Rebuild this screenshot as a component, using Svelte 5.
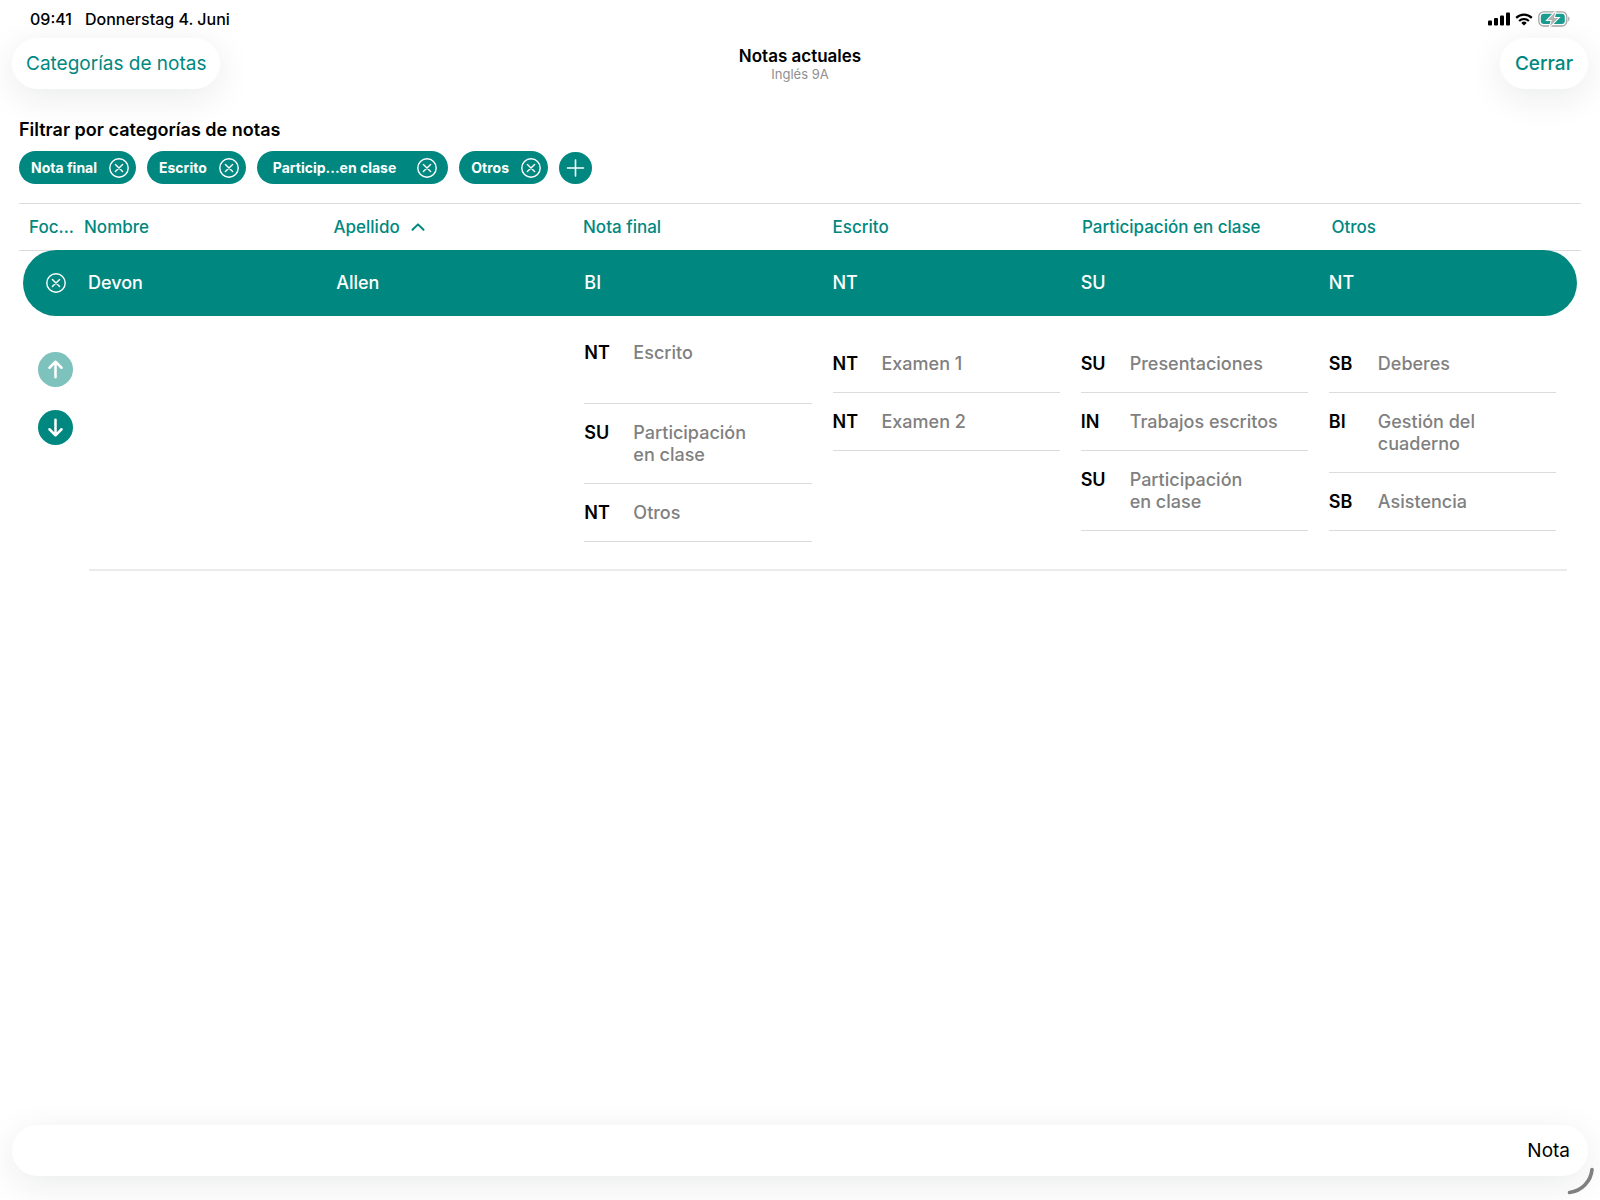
<script>
  const columns = ["Nota final", "Escrito", "Participación en clase", "Otros"];

  let filters = $state([
    { label: "Nota final" },
    { label: "Escrito" },
    { label: "Particip...en clase", full: "Participación en clase", wide: true },
    { label: "Otros" },
  ]);

  const student = { first: "Devon", last: "Allen", grades: ["BI", "NT", "SU", "NT"] };

  const details = [
    [
      { grade: "NT", label: "Escrito", tall: true },
      { grade: "SU", label: "Participación en clase" },
      { grade: "NT", label: "Otros" },
    ],
    [
      { grade: "NT", label: "Examen 1" },
      { grade: "NT", label: "Examen 2" },
    ],
    [
      { grade: "SU", label: "Presentaciones" },
      { grade: "IN", label: "Trabajos escritos" },
      { grade: "SU", label: "Participación en clase" },
    ],
    [
      { grade: "SB", label: "Deberes" },
      { grade: "BI", label: "Gestión del cuaderno" },
      { grade: "SB", label: "Asistencia" },
    ],
  ];

  function removeFilter(label) {
    filters = filters.filter((f) => f.label !== label);
  }
</script>

{#snippet closeIcon()}
  <svg class="close-icon" viewBox="0 0 20 20">
    <circle cx="10" cy="10" r="9.2"></circle>
    <path d="M6.4 6.4l7.2 7.2M13.6 6.4l-7.2 7.2"></path>
  </svg>
{/snippet}

<div class="screen">
  <!-- Status bar -->
  <div class="status">
    <span>09:41</span>
    <span>Donnerstag 4. Juni</span>
    <div class="status-icons">
      <svg width="22" height="14" viewBox="0 0 22 14">
        <rect x="0" y="8.5" width="4" height="5" rx="1"></rect>
        <rect x="6" y="6" width="4" height="7.5" rx="1"></rect>
        <rect x="12" y="3.5" width="4" height="10" rx="1"></rect>
        <rect x="18" y="0.5" width="4" height="13" rx="1"></rect>
      </svg>
      <svg width="18" height="13" viewBox="0 0 18 13">
        <g fill="none" stroke="#000" stroke-width="2.2">
          <path d="M1.2 4.9a11 11 0 0 1 15.6 0"></path>
          <path d="M4.1 8a7 7 0 0 1 9.8 0"></path>
        </g>
        <path d="M9 12.6L6.3 9.9a3.8 3.8 0 0 1 5.4 0z"></path>
      </svg>
      <svg width="32" height="16" viewBox="0 0 32 16">
        <rect x="0.8" y="0.8" width="28" height="14.2" rx="4.8" fill="none" stroke="#a5a5a5" stroke-width="1.3"></rect>
        <path d="M30.2 5.4c1.8 0.6 1.8 4.2 0 4.8z" fill="#a5a5a5"></path>
        <rect x="2.8" y="2.8" width="24" height="10.2" rx="3.2" fill="#1a9c90"></rect>
        <path d="M17.5 0.8L9.6 9h4.2l-1.7 6.2L20.2 7h-4.4z" fill="#b4b4b4" stroke="#fff" stroke-width="2" paint-order="stroke"></path>
      </svg>
    </div>
  </div>

  <!-- Navigation -->
  <header class="nav">
    <button type="button" class="pill">Categorías de notas</button>
    <div class="title">
      <h1>Notas actuales</h1>
      <p>Inglés 9A</p>
    </div>
    <button type="button" class="pill done">Cerrar</button>
  </header>

  <main>
    <h2>Filtrar por categorías de notas</h2>
    <div class="filters">
      {#each filters as filter}
        <div class="chip" class:wide={filter.wide}>
          <span>{filter.label}</span>
          <button
            type="button"
            aria-label="Quitar {filter.full ?? filter.label}"
            onclick={() => removeFilter(filter.label)}
          >
            {@render closeIcon()}
          </button>
        </div>
      {/each}
      <button type="button" class="add" aria-label="Añadir categoría">
        <svg viewBox="0 0 32 32"><path d="M16 8v16M8 16h16"></path></svg>
      </button>
    </div>

    <table>
      <thead>
        <tr>
          <th class="focus">Foc...</th>
          <th><button type="button">Nombre</button></th>
          <th aria-sort="ascending">
            <button type="button">
              Apellido
              <svg class="sort" viewBox="0 0 14 8"><path d="M1.5 6.8L7 1.4l5.5 5.4"></path></svg>
            </button>
          </th>
          {#each columns as column}
            <th><button type="button">{column}</button></th>
          {/each}
        </tr>
      </thead>
      <tbody>
        <tr class="student">
          <td class="control">
            <button type="button" aria-label="Quitar foco">{@render closeIcon()}</button>
          </td>
          <td>{student.first}</td>
          <td>{student.last}</td>
          {#each student.grades as grade}
            <td>{grade}</td>
          {/each}
        </tr>
        <tr class="details">
          <td class="arrows">
            <button type="button" aria-label="Anterior" disabled>
              <svg viewBox="0 0 36 36"><path d="M18 26V10.5M11.8 16.2L18 10l6.2 6.2"></path></svg>
            </button>
            <button type="button" aria-label="Siguiente">
              <svg viewBox="0 0 36 36"><path d="M18 10v15.5M11.8 19.8L18 26l6.2-6.2"></path></svg>
            </button>
          </td>
          <td></td>
          <td></td>
          {#each details as list, i}
            <td class:total={i === 0}>
              <ul>
                {#each list as item}
                  <li class:tall={item.tall}>
                    <span class="grade">{item.grade}</span>
                    <span class="label">{item.label}</span>
                  </li>
                {/each}
              </ul>
            </td>
          {/each}
        </tr>
      </tbody>
    </table>
    <hr />
  </main>

  <footer>
    <div class="toolbar">
      <button type="button">Nota</button>
    </div>
    <svg class="corner" viewBox="0 0 28 28">
      <path d="M25 2.5C24 14 15 24 2.5 25.5"></path>
    </svg>
  </footer>
</div>

<style>
  :global(body) {
    background: #fff;
  }

  .screen {
    --teal: #008880;
    --line: #dcdcdc;
    min-height: 100vh;
    display: flex;
    flex-direction: column;
    position: relative;
    overflow: hidden;
    font-family: Inter, "Liberation Sans", sans-serif;
    font-size: 18px;
    line-height: 22px;
    color: #000;
  }

  button {
    margin: 0;
    padding: 0;
    border: none;
    background: none;
    font: inherit;
    color: inherit;
    cursor: pointer;
  }

  svg {
    display: block;
  }

  h1,
  h2,
  p,
  ul {
    margin: 0;
    padding: 0;
  }

  /* Status bar */
  .status {
    display: flex;
    align-items: center;
    gap: 13px;
    padding: 8px 30px;
    font-size: 16px;
    font-weight: 500;
  }

  .status-icons {
    display: flex;
    align-items: center;
    gap: 5px;
    margin-left: auto;
  }

  /* Navigation */
  .nav {
    display: grid;
    grid-template-columns: 1fr auto 1fr;
    align-items: center;
    padding: 0 12px;
  }

  .pill {
    justify-self: start;
    height: 51px;
    padding: 0 14px;
    border-radius: 26px;
    background: #fff;
    box-shadow: 0 8px 36px rgba(0, 30, 20, 0.09);
    font-size: 19px;
    color: var(--teal);
  }

  .done {
    justify-self: end;
    padding: 0 15px;
    font-weight: 500;
  }

  .title {
    text-align: center;
  }

  h1 {
    font-size: 17px;
    line-height: 20px;
    font-weight: 600;
  }

  .title p {
    font-size: 13px;
    line-height: 16px;
    color: #8f8f8f;
  }

  main {
    flex: 1;
    padding: 30px 19px 0;
  }

  h2 {
    font-size: 18px;
    font-weight: 600;
  }

  /* Filters */
  .filters {
    display: flex;
    align-items: center;
    gap: 11px;
    margin: 10px 0 19px;
  }

  .chip {
    display: flex;
    align-items: center;
    gap: 12px;
    height: 33px;
    padding: 0 7px 0 12px;
    border-radius: 17px;
    background: var(--teal);
    color: #fff;
    font-size: 14px;
    font-weight: 700;
  }

  .wide {
    gap: 21px;
    padding: 0 11px 0 16px;
  }

  .close-icon {
    width: 20px;
    height: 20px;
    fill: none;
    stroke: #fff;
    stroke-width: 1.4;
    stroke-linecap: round;
  }

  .add svg {
    width: 33px;
    height: 32px;
    border-radius: 16px;
    background: var(--teal);
    stroke: #fff;
    stroke-width: 1.6;
    stroke-linecap: round;
  }

  /* Grades table */
  table,
  thead,
  tbody {
    display: block;
  }

  tr {
    display: grid;
    grid-template-columns: 65px repeat(6, minmax(0, 1fr));
  }

  th,
  td {
    padding: 0;
    text-align: left;
  }

  thead tr {
    height: 46px;
    align-items: center;
    border-top: 1px solid var(--line);
    border-bottom: 1px solid var(--line);
    font-size: 17px;
    color: var(--teal);
  }

  th {
    font-weight: 500;
  }

  th button {
    display: flex;
    align-items: center;
    gap: 11px;
  }

  .focus {
    padding-left: 10px;
  }

  .sort {
    width: 14px;
    height: 8px;
    fill: none;
    stroke: var(--teal);
    stroke-width: 2;
    stroke-linecap: round;
    stroke-linejoin: round;
  }

  tbody {
    margin: -1px 4px 0;
  }

  .student {
    height: 66px;
    align-items: center;
    border-radius: 33px;
    background: var(--teal);
    color: #fff;
    font-weight: 500;
  }

  .control {
    display: flex;
    justify-content: center;
  }

  .details {
    padding-bottom: 27px;
    font-weight: 500;
  }

  .details td {
    padding: 19px 21px 0 0;
  }

  .details .total {
    padding-top: 8px;
  }

  .details .arrows {
    display: flex;
    flex-direction: column;
    align-items: center;
    gap: 23px;
    padding: 36px 0 0;
  }

  .arrows svg {
    width: 35px;
    height: 35px;
    border-radius: 50%;
    background: var(--teal);
    fill: none;
    stroke: #fff;
    stroke-width: 2.6;
    stroke-linecap: round;
    stroke-linejoin: round;
  }

  .arrows button:disabled svg {
    background: #7dc2bd;
  }

  ul {
    list-style: none;
  }

  li {
    display: flex;
    padding: 18px 0 17px;
    border-bottom: 1px solid var(--line);
  }

  .tall {
    min-height: 44px;
  }

  .grade {
    flex: 0 0 49px;
    font-weight: 600;
  }

  .label {
    padding-right: 10px;
    color: #808080;
    text-wrap: balance;
  }

  hr {
    height: 2px;
    margin: 0 14px 0 70px;
    border: none;
    background: #e9eceb;
  }

  /* Bottom toolbar */
  footer {
    padding: 0 12px 24px;
  }

  .toolbar {
    display: flex;
    justify-content: flex-end;
    align-items: center;
    height: 51px;
    padding: 0 18px;
    border-radius: 26px;
    box-shadow: 0 8px 36px rgba(0, 30, 20, 0.09);
    font-size: 19px;
  }

  .corner {
    position: absolute;
    right: 5px;
    bottom: 5px;
    width: 28px;
    height: 28px;
    fill: none;
    stroke: #808080;
    stroke-width: 3.6;
    stroke-linecap: round;
  }
</style>
